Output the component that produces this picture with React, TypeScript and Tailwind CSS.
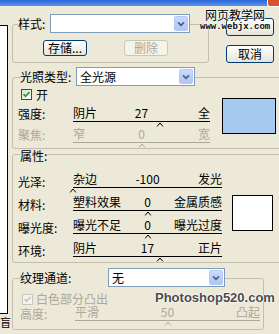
import type { ReactNode } from "react";

const Check = ({ off }: { off?: boolean }) => (
  <span
    className={`flex size-[11px] shrink-0 items-center justify-center border ${
      off
        ? "border-[#CAC8BB] bg-[#F4F3EE]"
        : "border-[#1C5180] bg-gradient-to-br from-[#DCDCD7] to-white"
    }`}
  >
    <svg width="9" height="9" viewBox="0 0 9 9">
      <path
        d="M1.5 4.2l2 2.1 4-4.3"
        fill="none"
        stroke={off ? "#CAC8BB" : "#21A121"}
        strokeWidth="1.8"
      />
    </svg>
  </span>
);

const Select = ({ w, value }: { w: string; value: string }) => (
  <div className={`${w} flex h-[19px] items-center border border-[#7F9DB9] bg-white`}>
    <span className="flex-1 pl-[3px] leading-[17px] text-black">{value}</span>
    <span className="mr-px flex h-[15px] w-[14px] items-center justify-center rounded-[2px] border border-[#B4C8F6] bg-gradient-to-b from-[#CBDAFC] to-[#B0C6F5]">
      <svg width="8" height="6" viewBox="0 0 8 6">
        <path d="M1 1.3l3 3 3-3" fill="none" stroke="#4D6185" strokeWidth="1.8" />
      </svg>
    </span>
  </div>
);

const Btn = ({
  className,
  off,
  children,
}: {
  className: string;
  off?: boolean;
  children?: ReactNode;
}) => (
  <div
    className={`flex shrink-0 items-center justify-center rounded-[3px] border leading-none ${className} ${
      off
        ? "border-[#C9C7BA] bg-[#F5F4EA] text-[#ACA899]"
        : "border-[#003C74] bg-gradient-to-b from-white to-[#E6E4DA] text-black"
    }`}
  >
    {children}
  </div>
);

interface SliderProps {
  w: string;
  left: string;
  mid: string;
  right: string;
  pos: number;
  off?: boolean;
}

const Slider = ({ w, left, mid, right, pos, off }: SliderProps) => (
  <div className={`${w} shrink-0`}>
    <div
      className={`grid h-[13px] grid-cols-[1fr_auto_1fr] leading-[13px] ${
        off ? "text-[#ACA899]" : "text-black"
      }`}
    >
      <span className="whitespace-nowrap">{left}</span>
      <span>{mid}</span>
      <span className="whitespace-nowrap text-right">{right}</span>
    </div>
    <div className={`mt-[2px] h-px ${off ? "bg-[#ACA899]" : "bg-black"}`} />
    <div className="relative h-[5px]">
      <svg
        className="absolute top-0 -translate-x-1/2"
        style={{ left: `${pos * 100}%` }}
        width="7"
        height="5"
        viewBox="0 0 7 5"
      >
        <polyline
          points="0.5,4.5 3.5,1 6.5,4.5"
          fill="none"
          stroke={off ? "#ACA899" : "#000"}
        />
      </svg>
    </div>
  </div>
);

const groupBox = "rounded-[3px] border border-[#C3BFAE]";
const halo = "[text-shadow:0_0_2px_#fff,0_0_2px_#fff,0_0_1px_#fff]";

export default function App() {
  return (
    <div className="relative h-[334px] w-[279px] overflow-hidden bg-[#ECE9D8] font-['Noto_Sans_CJK_SC',sans-serif] text-[12px] leading-[14px] text-black">
      {/* title bar */}
      <div className="flex h-[6px] justify-end bg-gradient-to-b from-[#2A66D8] to-[#5A92EC]">
        <div className="h-[7px] w-[12px] rounded-bl-[3px] border-b border-l border-white bg-[#D8532F]" />
      </div>

      <div className="flex">
        {/* preview strip, cut off */}
        <div className="flex w-[8px] shrink-0 flex-col">
          <div className="mt-[19px] h-[289px] border-y border-r border-black bg-white" />
          <span className="mt-[3px] whitespace-nowrap text-[11px] leading-[11px]">盲</span>
        </div>

        <div className="ml-[4px] flex min-w-0 flex-1 flex-col">
          {/* style + buttons */}
          <div className="flex items-start">
            <div className={`mt-[18px] w-[197px] shrink-0 pb-[6px] ${groupBox}`}>
              <div className="-mt-[11px] ml-[5px] flex w-fit items-center bg-[#ECE9D8]">
                <span className="w-[32px]">样式:</span>
                <Select w="w-[140px]" value="" />
              </div>
              <div className="mt-[7px] flex">
                <Btn className="ml-[30px] h-[16px] w-[44px]">存储...</Btn>
                <Btn off className="ml-[37px] h-[16px] w-[44px]">
                  删除
                </Btn>
              </div>
            </div>
            <div className="ml-[17px] mt-[12px] flex flex-col gap-[9px]">
              <Btn className="h-[18px] w-[48px]" />
              <Btn className="h-[18px] w-[48px]">取消</Btn>
            </div>
          </div>

          {/* light type */}
          <div className={`mt-[14px] w-[273px] shrink-0 ${groupBox}`}>
            <div className="-mt-[11px] ml-[7px] flex w-fit items-center bg-[#ECE9D8]">
              <span className="w-[56px]">光照类型:</span>
              <Select w="w-[119px]" value="全光源" />
            </div>
            <div className="flex">
              <div className="flex flex-col">
                <div className="mt-[2px] flex h-[13px] items-center pl-[8px]">
                  <Check />
                  <span className="ml-[4px] leading-[13px]">开</span>
                </div>
                <div className="mt-[5px] flex pl-[5px]">
                  <span className="mt-px w-[55px]">强度:</span>
                  <Slider w="w-[137px]" left="阴片" mid="27" right="全" pos={0.635} />
                </div>
                <div className="flex pl-[5px] text-[#ACA899]">
                  <span className="mt-px w-[55px]">聚焦:</span>
                  <Slider off w="w-[137px]" left="窄" mid="0" right="宽" pos={0.5} />
                </div>
              </div>
              <div className="ml-[12px] mt-[12px] h-[36px] w-[54px] border border-black bg-[#A6C9F0]" />
            </div>
          </div>

          {/* properties */}
          <div className={`mt-[5px] w-[273px] shrink-0 ${groupBox}`}>
            <div className="-mt-[6px] ml-[7px] w-fit bg-[#ECE9D8]">属性:</div>
            <div className="flex">
              <div className="mt-[9px] flex flex-col gap-[2px] pl-[5px]">
                <div className="flex">
                  <span className="mt-[3px] w-[55px]">光泽:</span>
                  <Slider w="w-[149px]" left="杂边" mid="-100" right="发光" pos={0} />
                </div>
                <div className="flex">
                  <span className="mt-[3px] w-[55px]">材料:</span>
                  <Slider w="w-[149px]" left="塑料效果" mid="0" right="金属质感" pos={0.5} />
                </div>
                <div className="flex">
                  <span className="mt-[3px] w-[55px]">曝光度:</span>
                  <Slider w="w-[149px]" left="曝光不足" mid="0" right="曝光过度" pos={0.5} />
                </div>
                <div className="flex">
                  <span className="mt-[3px] w-[55px]">环境:</span>
                  <Slider w="w-[149px]" left="阴片" mid="17" right="正片" pos={0.585} />
                </div>
              </div>
              <div className="ml-[10px] mt-[32px] h-[36px] w-[41px] border border-black bg-white" />
            </div>
          </div>

          {/* texture channel */}
          <div className={`mt-[15px] w-[252px] shrink-0 pb-[3px] ${groupBox}`}>
            <div className="-mt-[11px] ml-[7px] flex w-fit items-center bg-[#ECE9D8]">
              <span className="w-[88px]">纹理通道:</span>
              <Select w="w-[117px]" value="无" />
            </div>
            <div className="mt-[6px] flex h-[12px] items-center pl-[9px] text-[#ACA899]">
              <Check off />
              <span className="ml-[3px] leading-[12px]">白色部分凸出</span>
            </div>
            <div className="flex pl-[7px] text-[#ACA899]">
              <span className="mt-[2px] w-[55px] leading-[13px]">高度:</span>
              <Slider off w="w-[185px]" left="平滑" mid="50" right="凸起" pos={0.5} />
            </div>
          </div>
        </div>
      </div>

      {/* watermarks */}
      <div className="absolute left-[200px] top-[8px] flex flex-col items-center">
        <span className={`text-[12px] leading-[14px] ${halo}`}>网页教学网</span>
        <span className={`font-['Liberation_Mono',monospace] text-[9px] font-bold leading-[10px] ${halo}`}>
          www.webjx.com
        </span>
      </div>
      <span
        className={`absolute left-[155px] top-[291px] font-['Liberation_Sans',sans-serif] text-[13px] font-bold leading-[13px] text-[#4B4B4B] ${halo}`}
      >
        Photoshop520.com
      </span>
    </div>
  );
}
